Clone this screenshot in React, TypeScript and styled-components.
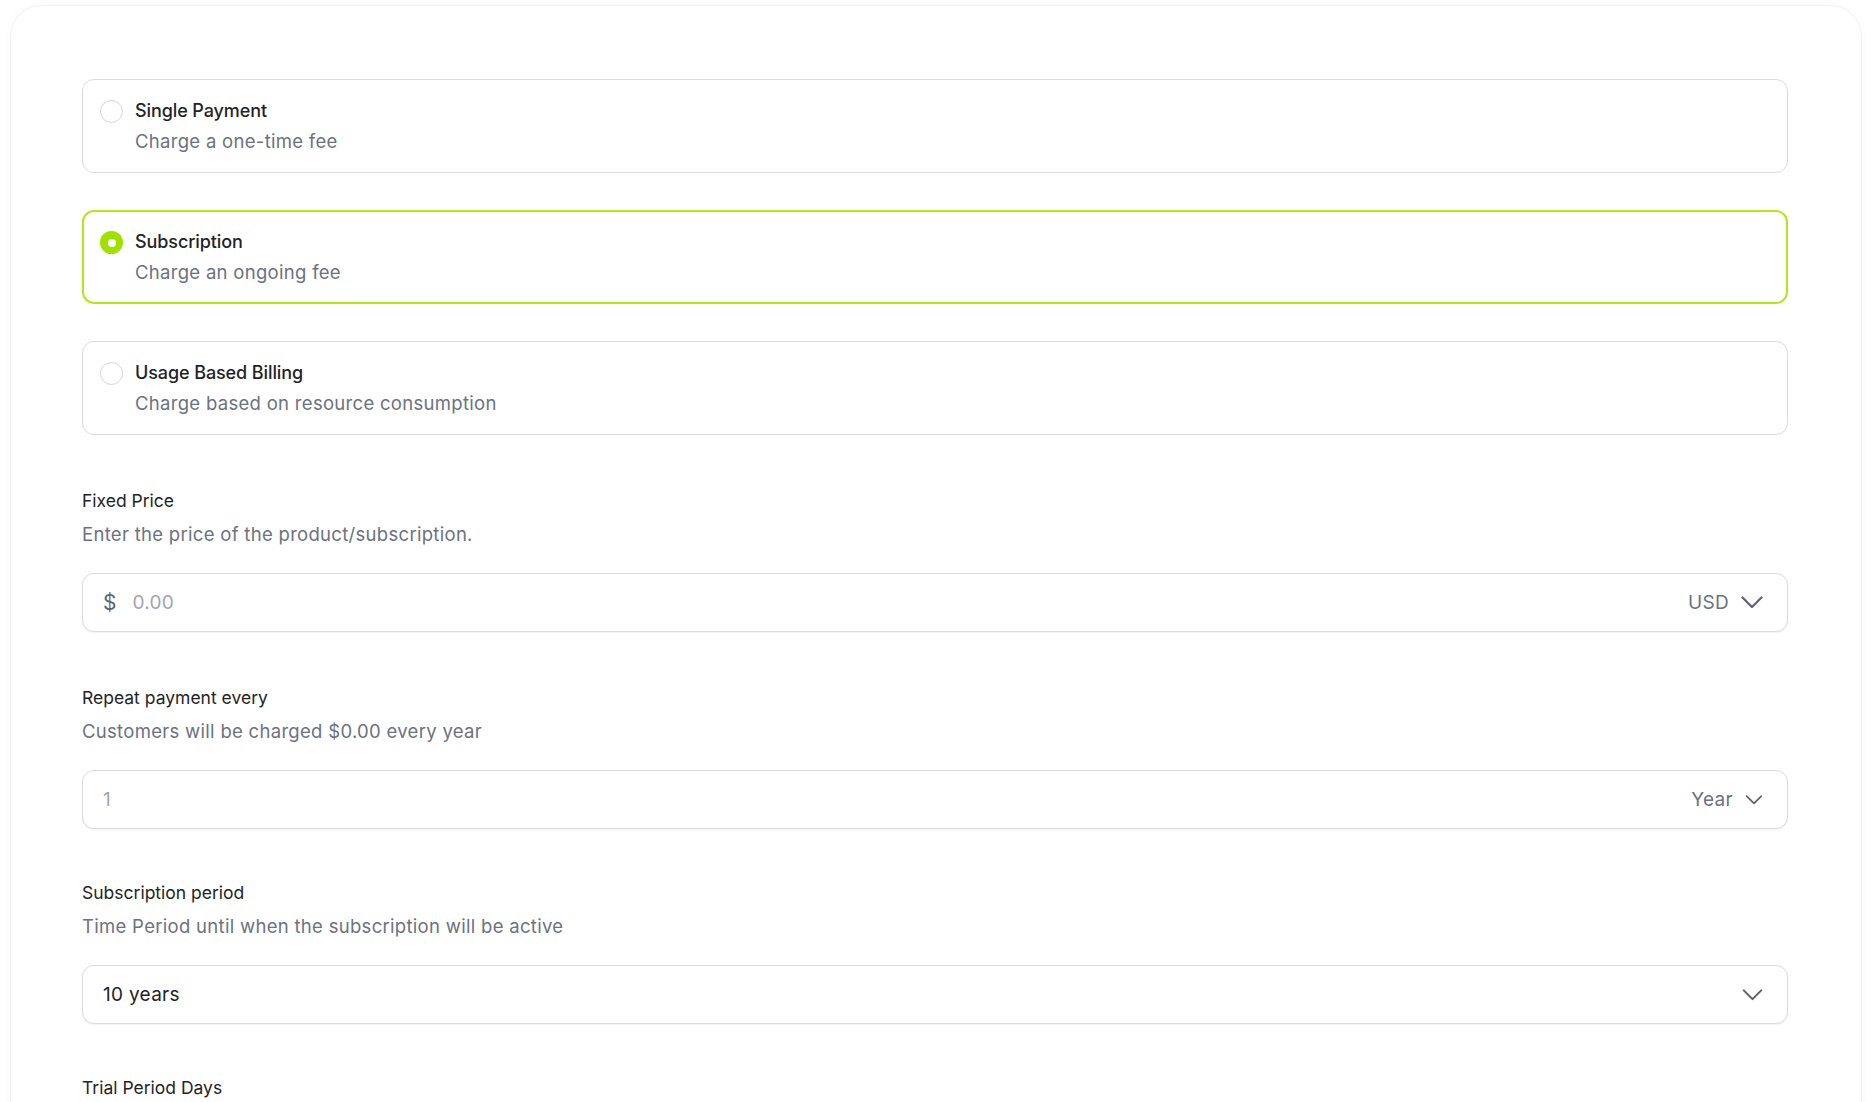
import React from "react";
import styled, { createGlobalStyle } from "styled-components";

const Global = createGlobalStyle`
  html, body { margin: 0; padding: 0; background: #ffffff; overflow: hidden; }
  body { font-family: Inter, "Noto Sans", sans-serif; -webkit-font-smoothing: antialiased; }
  * { box-sizing: border-box; }
`;

const Page = styled.div`
  padding: 5px 9px 0 10px;
  height: 1102px;
  overflow: hidden;
`;

const Panel = styled.div`
  background: #ffffff;
  border: 1px solid #f3f3f4;
  border-radius: 32px;
  box-shadow: 0 0 8px rgba(0, 0, 0, 0.035);
  padding: 73px 73px 200px 71px;
  display: flex;
  flex-direction: column;
`;

const Options = styled.div`
  display: flex;
  flex-direction: column;
  gap: 37px;
`;

const Option = styled.div<{ $active?: boolean }>`
  display: flex;
  align-items: flex-start;
  gap: 12px;
  height: 94px;
  padding: 19px 18px 0 17px;
  border: ${(p) => (p.$active ? "2px solid #b5e61d" : "1px solid #d8dbe0")};
  border-radius: 12px;
  background: #fff;
  ${(p) => (p.$active ? "padding: 18px 17px 0 16px;" : "")}
`;

const Radio = styled.span<{ $active?: boolean }>`
  flex: none;
  width: 23px;
  height: 23px;
  margin-top: 1px;
  border-radius: 50%;
  border: ${(p) => (p.$active ? "none" : "1.5px solid #d2d5da")};
  background: ${(p) => (p.$active ? "#a2e000" : "#fff")};
  display: flex;
  align-items: center;
  justify-content: center;
  &::after {
    content: "";
    display: ${(p) => (p.$active ? "block" : "none")};
    width: 8px;
    height: 8px;
    border-radius: 50%;
    background: #fff;
  }
`;

const OptionText = styled.div`
  display: flex;
  flex-direction: column;
  gap: 5px;
`;

const OptionTitle = styled.div`
  font-size: 18px;
  line-height: 24px;
  font-weight: 500;
  color: #1f2328;
  letter-spacing: -0.1px;
`;

const OptionDesc = styled.div`
  font-size: 18.5px;
  line-height: 26px;
  color: #6b7280;
  letter-spacing: 0.3px;
`;

const Field = styled.div<{ $gap?: number }>`
  display: flex;
  flex-direction: column;
  margin-top: ${(p) => p.$gap ?? 55}px;
`;

const Label = styled.div`
  font-size: 17.5px;
  line-height: 22px;
  color: #1f2328;
  letter-spacing: 0;
  margin-bottom: 8px;
`;

const Help = styled.div`
  font-size: 18.5px;
  line-height: 28px;
  color: #6b7280;
  letter-spacing: 0.3px;
  margin-bottom: 25px;
`;

const InputBox = styled.div`
  display: flex;
  align-items: center;
  height: 59px;
  padding: 0 24px 0 20px;
  border: 1px solid #d8dbe0;
  border-radius: 12px;
  background: #fff;
  box-shadow: 0 1px 2px rgba(16, 24, 40, 0.06);
`;

const Prefix = styled.span`
  font-size: 21px;
  color: #5f6673;
  margin-right: 16px;
`;

const Value = styled.span<{ $placeholder?: boolean }>`
  flex: 1;
  font-size: 19px;
  color: ${(p) => (p.$placeholder ? "#a0a6b1" : "#1f2328")};
  letter-spacing: 0.3px;
`;

const Suffix = styled.span`
  display: flex;
  align-items: center;
  gap: 12px;
  font-size: 19px;
  color: #6b7280;
  letter-spacing: 0.3px;
`;

const Chevron = ({ w = 22 }: { w?: number }) => (
  <svg width={w} height={Math.round(w * 0.58)} viewBox="0 0 22 13" fill="none">
    <path d="M1.5 1.5 L11 11 L20.5 1.5" stroke="#5b6270" strokeWidth="2.2" strokeLinecap="round" strokeLinejoin="round" />
  </svg>
);

const options = [
  { title: "Single Payment", desc: "Charge a one-time fee", active: false },
  { title: "Subscription", desc: "Charge an ongoing fee", active: true },
  { title: "Usage Based Billing", desc: "Charge based on resource consumption", active: false },
];

export default function App() {
  return (
    <>
      <Global />
      <Page>
        <Panel>
          <Options>
            {options.map((o) => (
              <Option key={o.title} $active={o.active}>
                <Radio $active={o.active} />
                <OptionText>
                  <OptionTitle>{o.title}</OptionTitle>
                  <OptionDesc>{o.desc}</OptionDesc>
                </OptionText>
              </Option>
            ))}
          </Options>

          <Field>
            <Label>Fixed Price</Label>
            <Help>Enter the price of the product/subscription.</Help>
            <InputBox>
              <Prefix>$</Prefix>
              <Value $placeholder>0.00</Value>
              <Suffix>
                USD
                <Chevron />
              </Suffix>
            </InputBox>
          </Field>

          <Field>
            <Label>Repeat payment every</Label>
            <Help>Customers will be charged $0.00 every year</Help>
            <InputBox>
              <Value $placeholder>1</Value>
              <Suffix>
                Year
                <Chevron w={18} />
              </Suffix>
            </InputBox>
          </Field>

          <Field $gap={53}>
            <Label>Subscription period</Label>
            <Help>Time Period until when the subscription will be active</Help>
            <InputBox>
              <Value>10 years</Value>
              <Chevron w={21} />
            </InputBox>
          </Field>

          <Field $gap={53}>
            <Label>Trial Period Days</Label>
          </Field>
        </Panel>
      </Page>
    </>
  );
}
